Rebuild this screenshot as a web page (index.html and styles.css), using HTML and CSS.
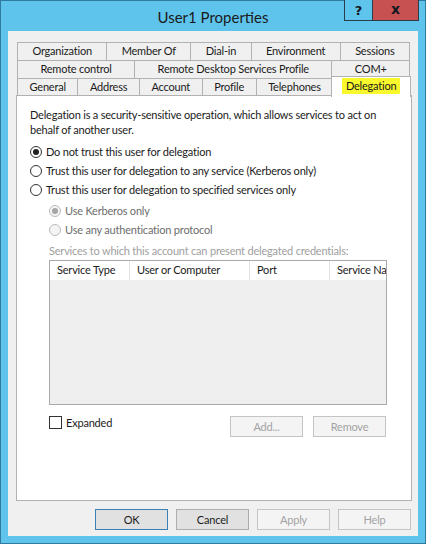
FILE: index.html
```html
<!DOCTYPE html>
<html lang="en">
<head>
    <meta charset="UTF-8">
    <title>User1 Properties</title>
    <link rel="stylesheet" href="styles.css">
</head>
<body>
    <div class="window">
        <div class="titlebar">
            <span></span>
            <div class="title">User1 Properties</div>
            <div class="controls">
                <span class="ctl ctl-help">?</span>
                <span class="ctl ctl-close">x</span>
            </div>
        </div>

        <div class="client">
            <div class="tabs">
                <div class="tabRow">
                    <span class="tab">Organization</span>
                    <span class="tab">Member Of</span>
                    <span class="tab">Dial-in</span>
                    <span class="tab">Environment</span>
                    <span class="tab">Sessions</span>
                </div>
                <div class="tabRow">
                    <span class="tab">Remote control</span>
                    <span class="tab">Remote Desktop Services Profile</span>
                    <span class="tab">COM+</span>
                </div>
                <div class="tabRow">
                    <span class="tab">General</span>
                    <span class="tab">Address</span>
                    <span class="tab">Account</span>
                    <span class="tab">Profile</span>
                    <span class="tab">Telephones</span>
                    <span class="tab selected"><span class="marker">Delegation</span></span>
                </div>
            </div>

            <div class="panel">
                <p class="intro">Delegation is a security-sensitive operation, which allows services to act on<br>behalf of another user.</p>

                <div class="options">
                    <label class="radio"><span class="dot checked"></span>Do not trust this user for delegation</label>
                    <label class="radio"><span class="dot"></span>Trust this user for delegation to any service (Kerberos only)</label>
                    <label class="radio"><span class="dot"></span>Trust this user for delegation to specified services only</label>
                </div>

                <div class="subOptions">
                    <label class="radio disabled"><span class="dot checked"></span>Use Kerberos only</label>
                    <label class="radio disabled"><span class="dot"></span>Use any authentication protocol</label>
                    <div class="servicesLabel">Services to which this account can present delegated credentials:</div>

                    <div class="listView">
                        <div class="lvHead">
                            <span class="lvCol col1">Service Type</span>
                            <span class="lvCol col2">User or Computer</span>
                            <span class="lvCol col3">Port</span>
                            <span class="lvCol col4">Service Na</span>
                        </div>
                        <div class="lvBody"></div>
                    </div>

                    <div class="listActions">
                        <label class="check"><span class="box"></span>Expanded</label>
                        <div class="actionBtns">
                            <button class="btn" disabled>Add...</button>
                            <button class="btn" disabled>Remove</button>
                        </div>
                    </div>
                </div>
            </div>

            <div class="dialogBtns">
                <button class="btn default">OK</button>
                <button class="btn">Cancel</button>
                <button class="btn" disabled>Apply</button>
                <button class="btn" disabled>Help</button>
            </div>
        </div>
    </div>
</body>
</html>
```

FILE: styles.css
```css
body {
    margin: 0;
    background: #ffffff;
    font-family: 'Lato', 'Liberation Sans', sans-serif;
    font-size: 11px;
    letter-spacing: -0.2px;
    color: #1b1b1b;
}

.window {
    box-sizing: border-box;
    width: 426px;
    height: 544px;
    background: #5fc4ec;
    border: 1px solid #2f7aa0;
    padding: 0 7px 7px 7px;
    display: flex;
    flex-direction: column;
}

.titlebar {
    height: 30px;
    display: grid;
    grid-template-columns: 1fr auto 1fr;
    align-items: center;
}

.title {
    font-size: 15px;
    letter-spacing: 0;
    color: #1a1a1a;
    padding-top: 2px;
}

.controls {
    justify-self: end;
    align-self: start;
    display: flex;
    margin: -1px -1px 0 0;
    border: 1px solid #2a3e4a;
    border-top: none;
}

.ctl {
    height: 20px;
    display: flex;
    align-items: center;
    justify-content: center;
    font-family: 'DejaVu Sans', sans-serif;
    font-weight: bold;
    font-size: 13px;
    letter-spacing: 0;
    color: #101820;
}

.ctl-help {
    width: 27px;
    background: #5fc4ec;
    border-right: 1px solid #2a3e4a;
}

.ctl-close {
    width: 45px;
    background: #c75050;
    font-size: 14px;
    padding-bottom: 2px;
    box-sizing: border-box;
}

.client {
    flex: 1;
    background: #f0f0f0;
    padding: 11px 6px 0 8px;
}

.tabs {
    padding: 0 2px 0 1px;
}

.tabRow {
    display: flex;
}

.tab {
    flex: auto;
    box-sizing: border-box;
    height: 18px;
    line-height: 16px;
    text-align: center;
    background: #f0f0f0;
    border: 1px solid #b2b2b2;
    border-bottom: none;
    margin-left: -1px;
    padding: 0 6px;
    white-space: nowrap;
}

.tab:first-child {
    margin-left: 0;
}

.tab.selected {
    position: relative;
    z-index: 2;
    height: 21px;
    margin: -2px -1px -1px -2px;
    padding: 0 4px;
    background: #ffffff;
    line-height: 18px;
}

.marker {
    background: #f8f82c;
    padding: 1px 4px 2px 4px;
}

.panel {
    position: relative;
    z-index: 1;
    box-sizing: border-box;
    height: 406px;
    margin-top: -1px;
    background: #ffffff;
    border: 1px solid #b2b2b2;
    padding: 11px 13px 0 13px;
}

.intro {
    margin: 0;
    line-height: 15px;
}

.options {
    margin-top: 5px;
}

.radio {
    display: flex;
    align-items: center;
    height: 19px;
}

.dot {
    box-sizing: border-box;
    width: 12px;
    height: 12px;
    border: 1px solid #333333;
    border-radius: 50%;
    background: #ffffff;
    margin-right: 4px;
    display: flex;
    align-items: center;
    justify-content: center;
}

.dot.checked::after {
    content: "";
    width: 6px;
    height: 6px;
    border-radius: 50%;
    background: #222222;
}

.radio.disabled {
    color: #6d6d6d;
}

.radio.disabled .dot {
    border-color: #bcbcbc;
    background: #f4f4f4;
}

.radio.disabled .dot.checked::after {
    background: #a6a6a6;
}

.subOptions {
    margin: 2px 0 0 19px;
}

.servicesLabel {
    color: #a0a0a0;
    line-height: 15px;
    margin-top: 4px;
}

.listView {
    box-sizing: border-box;
    width: 338px;
    height: 145px;
    margin-top: 2px;
    border: 1px solid #a9a9a9;
    background: #f0eff0;
    display: flex;
    flex-direction: column;
    overflow: hidden;
}

.lvHead {
    display: flex;
    height: 19px;
    background: #ffffff;
    border-bottom: 1px solid #f0f0f0;
    white-space: nowrap;
}

.lvCol {
    box-sizing: border-box;
    flex: none;
    line-height: 18px;
    padding-left: 7px;
    border-right: 1px solid #e3e3e3;
    overflow: hidden;
}

.col1 { width: 80px; }
.col2 { width: 120px; }
.col3 { width: 80px; }
.col4 { width: 56px; border-right: none; }

.listActions {
    display: flex;
    justify-content: space-between;
    align-items: flex-start;
    width: 338px;
    margin-top: 10px;
}

.check {
    display: flex;
    align-items: center;
    height: 14px;
}

.box {
    box-sizing: border-box;
    width: 13px;
    height: 13px;
    border: 1px solid #333333;
    background: #ffffff;
    margin-right: 4px;
}

.actionBtns {
    display: flex;
    gap: 10px;
    margin-top: 1px;
    margin-right: 1px;
}

.btn {
    box-sizing: border-box;
    width: 73px;
    height: 21px;
    font-family: inherit;
    font-size: 11px;
    letter-spacing: -0.2px;
    color: #1b1b1b;
    background: #e1e1e1;
    border: 1px solid #adadad;
    padding: 0;
}

.btn.default {
    border-color: #3c7fb1;
}

.btn:disabled {
    background: #f4f4f4;
    border-color: #c4c4c4;
    color: #a3a3a3;
}

.dialogBtns {
    display: flex;
    justify-content: flex-end;
    gap: 8px;
    margin-top: 8px;
    padding-right: 1px;
}
```
